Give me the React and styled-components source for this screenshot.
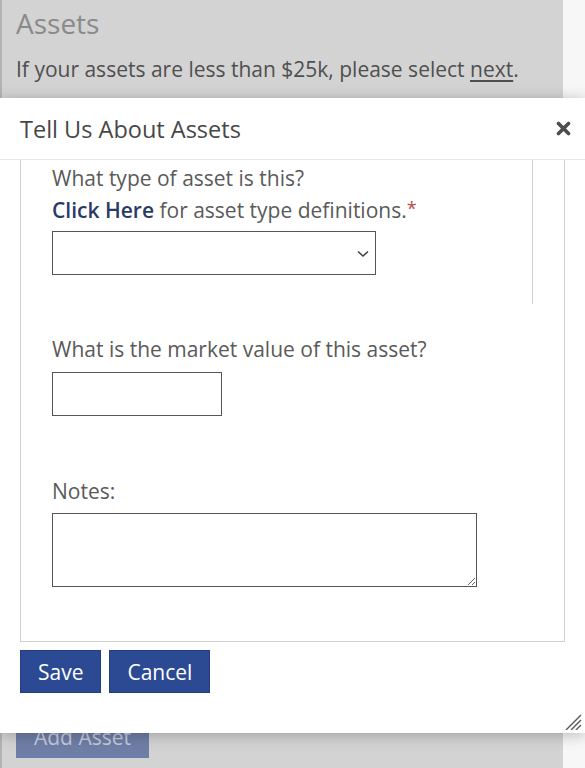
import styled, { createGlobalStyle } from "styled-components"

const GlobalStyle = createGlobalStyle`
    html, body {
        margin: 0;
        padding: 0;
        height: 100%;
        background: #f7f7f7;
        overflow: hidden;
    }
    #root {
        height: 100%;
    }
    * {
        box-sizing: border-box;
    }
`

export default function App() {
    return (
        <Screen>
            <GlobalStyle />
            <PagePanel>
                <PageTitle>Assets</PageTitle>
                <PageText>If your assets are less than $25k, please select <u>next</u>.</PageText>
                <AddAssetButton>Add Asset</AddAssetButton>
            </PagePanel>

            <Modal>
                <ModalHeader>
                    <ModalTitle>Tell Us About Assets</ModalTitle>
                    <CloseButton aria-label="close">
                        <svg width="15" height="15" viewBox="0 0 15 15">
                            <path d="M2.5 2.5 L12.5 12.5 M12.5 2.5 L2.5 12.5" stroke="#4d4d4d" strokeWidth="3.6" strokeLinecap="round" />
                        </svg>
                    </CloseButton>
                </ModalHeader>

                <ModalBody>
                    <TypeSection>
                        <Label>What type of asset is this?</Label>
                        <Label>
                            <LinkText>Click Here</LinkText> for asset type definitions.<Required>*</Required>
                        </Label>
                        <SelectWrap>
                            <Select defaultValue="">
                                <option value=""></option>
                                <option value="cash">Cash</option>
                                <option value="property">Property</option>
                            </Select>
                            <Chevron width="12" height="8" viewBox="0 0 12 8">
                                <path d="M1 1.5 L6 6 L11 1.5" stroke="#444" strokeWidth="1.6" fill="none" />
                            </Chevron>
                        </SelectWrap>
                    </TypeSection>

                    <Field $top={30}>
                        <Label>What is the market value of this asset?</Label>
                        <TextInput type="text" />
                    </Field>

                    <Field $top={60}>
                        <Label>Notes:</Label>
                        <NotesArea />
                    </Field>
                </ModalBody>

                <ButtonRow>
                    <PrimaryButton>Save</PrimaryButton>
                    <PrimaryButton>Cancel</PrimaryButton>
                </ButtonRow>

                <ResizeGrip width="20" height="18" viewBox="0 0 20 18">
                    <path d="M19 3 L4 18 M19 8 L9 18 M19 13 L14 18" stroke="#555" strokeWidth="1.4" />
                </ResizeGrip>
            </Modal>
        </Screen>
    )
}

const Screen = styled.div`
    position: relative;
    width: 585px;
    height: 768px;
    overflow: hidden;
    font-family: "Open Sans", "Noto Sans", sans-serif;
`
const PagePanel = styled.div`
    width: 563px;
    height: 100%;
    background: #d3d3d3;
    border-left: 2px solid #b3b3b3;
    padding: 6px 0 0 14px;
    display: flex;
    flex-direction: column;
    align-items: flex-start;
`
const PageTitle = styled.h1`
    margin: 0;
    font-size: 28px;
    font-weight: 400;
    line-height: 34px;
    color: #8a8a8a;
`
const PageText = styled.p`
    margin: 16px 0 0;
    font-size: 21px;
    line-height: 26px;
    color: #4f4f4f;
    u {
        text-underline-offset: 3px;
    }
`
const AddAssetButton = styled.button`
    margin-top: auto;
    margin-bottom: 10px;
    width: 133px;
    height: 42px;
    border: none;
    background: #6f7ea6;
    color: #c3cadb;
    font-family: inherit;
    font-size: 21px;
`
const Modal = styled.div`
    position: absolute;
    top: 98px;
    left: 0;
    width: 585px;
    height: 635px;
    background: #fff;
    box-shadow: 0 2px 14px rgba(0, 0, 0, 0.25);
    display: flex;
    flex-direction: column;
`
const ModalHeader = styled.div`
    height: 62px;
    flex-shrink: 0;
    padding: 0 14px 0 20px;
    border-bottom: 1px solid #e6e6e6;
    display: flex;
    align-items: center;
    justify-content: space-between;
`
const ModalTitle = styled.h2`
    margin: 0;
    font-size: 23.5px;
    font-weight: 400;
    color: #474747;
`
const CloseButton = styled.button`
    border: none;
    background: none;
    padding: 0;
    display: flex;
`
const ModalBody = styled.div`
    margin: 0 20px;
    height: 482px;
    flex-shrink: 0;
    border: 1px solid #cfcfcf;
    border-top: none;
    display: flex;
    flex-direction: column;
`
const TypeSection = styled.div`
    width: 512px;
    height: 144px;
    padding: 3px 0 0 31px;
    border-right: 1px solid #cfcfcf;
    display: flex;
    flex-direction: column;
    align-items: flex-start;
`
const Field = styled.div`
    margin-top: ${(p) => p.$top}px;
    padding-left: 31px;
    display: flex;
    flex-direction: column;
    align-items: flex-start;
`
const Label = styled.div`
    font-size: 21px;
    line-height: 30px;
    color: #5a5a5a;
`
const LinkText = styled.a`
    color: #2b3a67;
    font-weight: 600;
    text-decoration: none;
`
const Required = styled.span`
    color: #b24b4b;
    font-size: 18px;
    vertical-align: 3px;
`
const SelectWrap = styled.div`
    position: relative;
    margin-top: 6px;
`
const Select = styled.select`
    appearance: none;
    width: 324px;
    height: 44px;
    border: 1px solid #555;
    border-radius: 0;
    background: #fff;
    font-family: inherit;
    font-size: 18px;
`
const Chevron = styled.svg`
    position: absolute;
    right: 7px;
    top: 19px;
    pointer-events: none;
`
const TextInput = styled.input`
    margin-top: 8px;
    width: 170px;
    height: 44px;
    border: 1px solid #555;
    border-radius: 0;
    font-family: inherit;
    font-size: 18px;
`
const NotesArea = styled.textarea`
    margin-top: 7px;
    width: 425px;
    height: 74px;
    border: 1px solid #555;
    border-radius: 0;
    font-family: inherit;
    font-size: 18px;
`
const ButtonRow = styled.div`
    margin-top: 8px;
    padding-left: 20px;
    display: flex;
    gap: 8px;
`
const PrimaryButton = styled.button`
    height: 43px;
    padding: 0 17px;
    border: 1px solid #233d80;
    background: #2c4a94;
    color: #fff;
    font-family: inherit;
    font-size: 21px;
`
const ResizeGrip = styled.svg`
    position: absolute;
    right: 3px;
    bottom: 3px;
`
